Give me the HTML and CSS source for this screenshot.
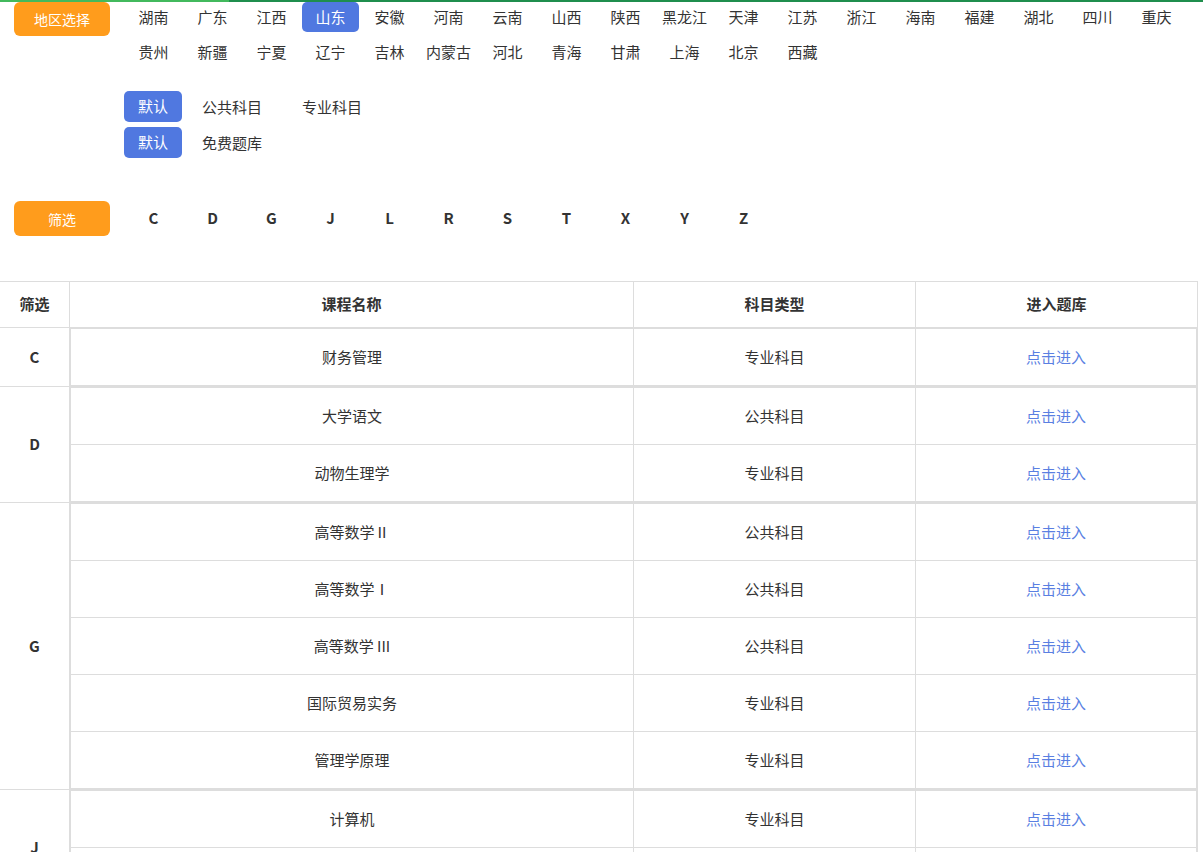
FILE: index.html
```html
<!DOCTYPE html>
<html lang="zh-CN">
<head>
<meta charset="utf-8">
<title>题库</title>
<link rel="stylesheet" href="styles.css">
</head>
<body>
<div class="progress"></div>

<section class="filter-row region">
  <button class="tag-btn">地区选择</button>
  <ul class="opt-list">
    <li>湖南</li><li>广东</li><li>江西</li><li class="active">山东</li><li>安徽</li><li>河南</li><li>云南</li><li>山西</li><li>陕西</li><li>黑龙江</li><li>天津</li><li>江苏</li><li>浙江</li><li>海南</li><li>福建</li><li>湖北</li><li>四川</li><li>重庆</li>
    <li>贵州</li><li>新疆</li><li>宁夏</li><li>辽宁</li><li>吉林</li><li>内蒙古</li><li>河北</li><li>青海</li><li>甘肃</li><li>上海</li><li>北京</li><li>西藏</li>
  </ul>
</section>

<section class="cat">
  <div class="cat-row"><span class="btn-blue">默认</span><span class="cat-item">公共科目</span><span class="cat-item">专业科目</span></div>
  <div class="cat-row"><span class="btn-blue">默认</span><span class="cat-item">免费题库</span></div>
</section>

<section class="filter-row letters">
  <button class="tag-btn tall">筛选</button>
  <ul class="opt-list letter-list">
    <li>C</li><li>D</li><li>G</li><li>J</li><li>L</li><li>R</li><li>S</li><li>T</li><li>X</li><li>Y</li><li>Z</li>
  </ul>
</section>

<table class="course-table">
  <thead>
    <tr><th class="c-letter">筛选</th><th class="c-name">课程名称</th><th class="c-type">科目类型</th><th class="c-go">进入题库</th></tr>
  </thead>
  <tbody>
    <tr><td class="letter">C</td><td class="group" colspan="3">
      <table class="sub"><colgroup><col class="s-name"><col class="s-type"><col class="s-go"></colgroup>
        <tr><td>财务管理</td><td>专业科目</td><td><a href="#">点击进入</a></td></tr>
      </table></td></tr>
    <tr><td class="letter">D</td><td class="group" colspan="3">
      <table class="sub"><colgroup><col class="s-name"><col class="s-type"><col class="s-go"></colgroup>
        <tr><td>大学语文</td><td>公共科目</td><td><a href="#">点击进入</a></td></tr>
        <tr><td>动物生理学</td><td>专业科目</td><td><a href="#">点击进入</a></td></tr>
      </table></td></tr>
    <tr><td class="letter">G</td><td class="group" colspan="3">
      <table class="sub"><colgroup><col class="s-name"><col class="s-type"><col class="s-go"></colgroup>
        <tr><td>高等数学Ⅱ</td><td>公共科目</td><td><a href="#">点击进入</a></td></tr>
        <tr><td>高等数学Ⅰ</td><td>公共科目</td><td><a href="#">点击进入</a></td></tr>
        <tr><td>高等数学 III</td><td>公共科目</td><td><a href="#">点击进入</a></td></tr>
        <tr><td>国际贸易实务</td><td>专业科目</td><td><a href="#">点击进入</a></td></tr>
        <tr><td>管理学原理</td><td>专业科目</td><td><a href="#">点击进入</a></td></tr>
      </table></td></tr>
    <tr><td class="letter">J</td><td class="group" colspan="3">
      <table class="sub"><colgroup><col class="s-name"><col class="s-type"><col class="s-go"></colgroup>
        <tr><td>计算机</td><td>专业科目</td><td><a href="#">点击进入</a></td></tr>
        <tr><td>经济法</td><td>专业科目</td><td><a href="#">点击进入</a></td></tr>
      </table></td></tr>
    <tr><td class="letter">L</td><td class="group" colspan="3">
      <table class="sub"><colgroup><col class="s-name"><col class="s-type"><col class="s-go"></colgroup>
        <tr><td>临床医学</td><td>专业科目</td><td><a href="#">点击进入</a></td></tr>
      </table></td></tr>
  </tbody>
</table>
</body>
</html>
```

FILE: styles.css
```css
html {
  overflow-y: scroll;
}
html::-webkit-scrollbar {
  width: 5px;
  background: #f1f1f1;
}
html::-webkit-scrollbar-thumb {
  background: #f1f1f1;
}
body {
  margin: 0;
  font-family: "Noto Sans CJK SC", "Noto Sans", sans-serif;
  font-size: 15px;
  color: #333;
  background: #fff;
}

.progress {
  position: fixed;
  top: 0;
  left: 0;
  right: 0;
  height: 2px;
  background: linear-gradient(to right, #42b95d 0, #42b95d 229px, #1f8e4d 229px);
  z-index: 10;
}

.filter-row {
  display: flex;
  align-items: flex-start;
  gap: 15px;
  padding-left: 14px;
}
.region {
  padding-top: 2px;
}
.tag-btn {
  flex: none;
  width: 96px;
  height: 34px;
  border: 0;
  border-radius: 6px;
  background: #ff9c1c;
  color: #fff;
  font-family: "Noto Sans CJK SC", sans-serif;
  font-size: 14px;
  padding: 0;
}
.tag-btn.tall {
  height: 35px;
}

.opt-list {
  list-style: none;
  margin: 0;
  padding: 0;
  flex: 1;
  display: flex;
  flex-wrap: wrap;
  column-gap: 2px;
  row-gap: 5px;
}
.opt-list li {
  width: 57px;
  height: 30px;
  line-height: 30px;
  text-align: center;
  border-radius: 5px;
}
.opt-list li.active {
  background: #5078e0;
  color: #fff;
}
.letter-list li {
  height: 35px;
  line-height: 33px;
  font-weight: bold;
}

.cat {
  margin-top: 24px;
  padding-left: 124px;
  display: flex;
  flex-direction: column;
  gap: 5px;
}
.cat-row {
  display: flex;
  align-items: center;
  height: 31px;
}
.btn-blue {
  width: 58px;
  height: 31px;
  line-height: 30px;
  text-align: center;
  background: #5078e0;
  color: #fff;
  border-radius: 5px;
}
.cat-item {
  padding: 0 20px 1px;
}

.letters {
  margin-top: 43px;
}

.course-table {
  margin-top: 45px;
  width: 1198px;
  border-collapse: separate;
  border-spacing: 0;
  table-layout: fixed;
  border-top: 1px solid #ddd;
  border-right: 1px solid #ddd;
}
.course-table th,
.course-table td {
  box-sizing: border-box;
  padding: 0;
  text-align: center;
  vertical-align: middle;
}
.course-table th {
  height: 46px;
  padding-bottom: 2px;
  font-weight: bold;
  border-bottom: 1px solid #ddd;
  border-right: 1px solid #ddd;
}
.course-table th.c-go {
  border-right: 0;
}
.c-letter { width: 70px; }
.c-name { width: 564px; }
.c-type { width: 282px; }
.c-go { width: 281px; }

.course-table td.letter {
  font-weight: bold;
  padding-bottom: 2px;
  border-right: 1px solid #ddd;
  border-bottom: 1px solid #ddd;
}
.course-table td.group {
  border-bottom: 1px solid #ddd;
}

.sub {
  width: 100%;
  border-collapse: separate;
  border-spacing: 0;
  table-layout: fixed;
  border: 1px solid #ddd;
}
.s-name { width: 563px; }
.s-type { width: 282px; }
.s-go { width: 280px; }
.sub td {
  box-sizing: content-box;
  height: 54px;
  padding: 0 0 2px;
  text-align: center;
  vertical-align: middle;
  border-right: 1px solid #ddd;
  border-bottom: 1px solid #ddd;
}
.sub td:last-child {
  border-right: 0;
}
.sub tr:last-child td {
  border-bottom: 0;
}
.sub a {
  color: #5a7fe2;
  text-decoration: none;
}
```
